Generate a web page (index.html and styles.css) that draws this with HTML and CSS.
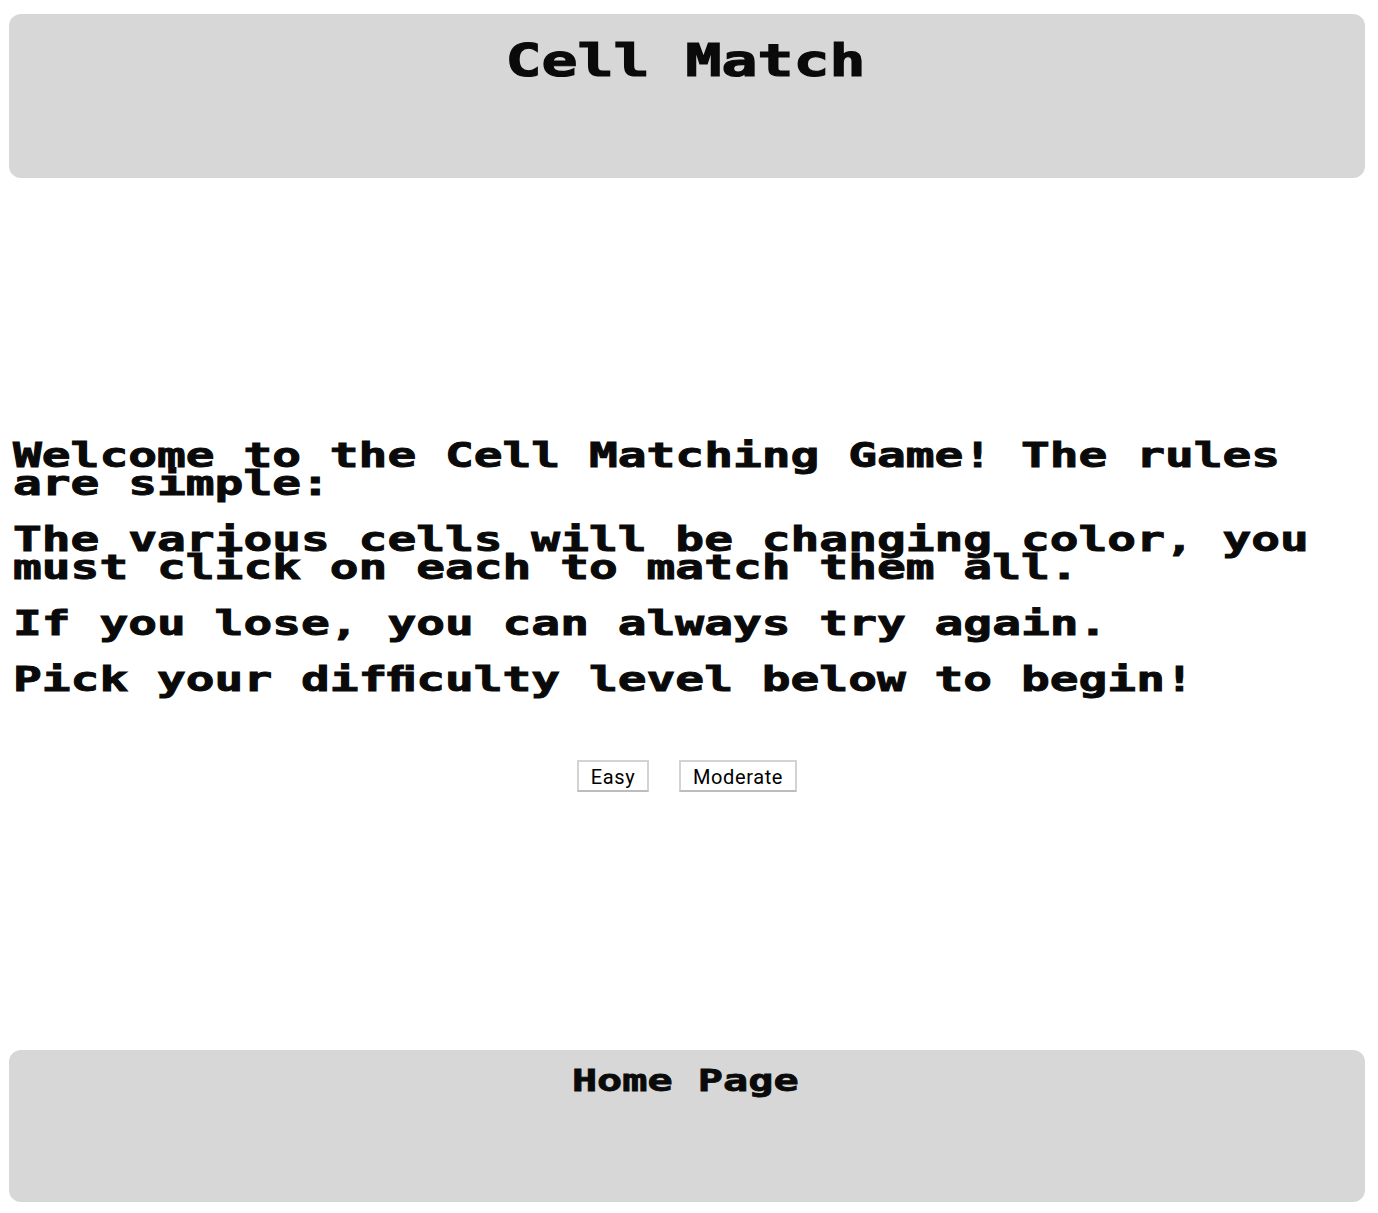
FILE: index.html
```html
<!DOCTYPE html>
<html lang="en">
<head>
<meta charset="utf-8">
<title>Cell Match</title>
<link rel="stylesheet" href="styles.css">
</head>
<body>
<header class="panel header"><h1 class="title">Cell Match</h1></header>
<main class="main">
<div class="rules">
<p>Welcome to the Cell Matching Game! The rules<br>are simple:</p>
<p>The various cells will be changing color, you<br>must click on each to match them all.</p>
<p>If you lose, you can always try again.</p>
<p>Pick your difﬁculty level below to begin!</p>
</div>
<div class="levels">
<button class="level easy">Easy</button>
<button class="level moderate">Moderate</button>
</div>
</main>
<footer class="panel footer"><a class="home">Home Page</a></footer>
</body>
</html>
```

FILE: styles.css
```css
* { box-sizing: border-box; }
body {
  margin: 0;
  padding: 14px 13px 11px 9px;
  height: 1213px;
  display: flex;
  flex-direction: column;
  background: #fff;
  color: #0a0a0a;
  font-family: "DejaVu Sans Mono", monospace;
  font-weight: bold;
  overflow: hidden;
}
.panel {
  background: #d7d7d7;
  border-radius: 12px;
  display: flex;
  justify-content: center;
  align-items: flex-start;
}
.header { height: 164px; padding: 24px 4px 0 0; }
.footer { height: 152px; padding: 16px 3px 0 0; }
.title {
  margin: 0;
  font-size: 44px;
  line-height: 46px;
  transform: scaleX(1.359);
  -webkit-text-stroke: 1.2px #0a0a0a;
}
.home {
  font-size: 30px;
  line-height: 30px;
  transform: scaleX(1.395);
  -webkit-text-stroke: 0.8px #0a0a0a;
}
.main { height: 872px; padding-top: 264px; }
/* Letters are widened to one 28.8px cell each */
.rules {
  margin-left: 4px;
  width: 68%;
  font-size: 33px;
  line-height: 28px;
  white-space: nowrap;
  transform: scaleX(1.4495);
  transform-origin: left top;
  -webkit-text-stroke: 0.9px #0a0a0a;
}
.rules p { margin: 0 0 28px; }
.levels {
  display: flex;
  justify-content: center;
  gap: 30px;
  margin-top: 66px;
}
.level {
  height: 32px;
  padding: 1px 0 0;
  background: #fff;
  border: 2px solid #d3d3d3;
  border-bottom-color: #bcbcbc;
  color: #000;
  font: 20px/28px Roboto, sans-serif;
  letter-spacing: 0.6px;
}
.easy { width: 72px; }
.moderate { width: 118px; }
```
